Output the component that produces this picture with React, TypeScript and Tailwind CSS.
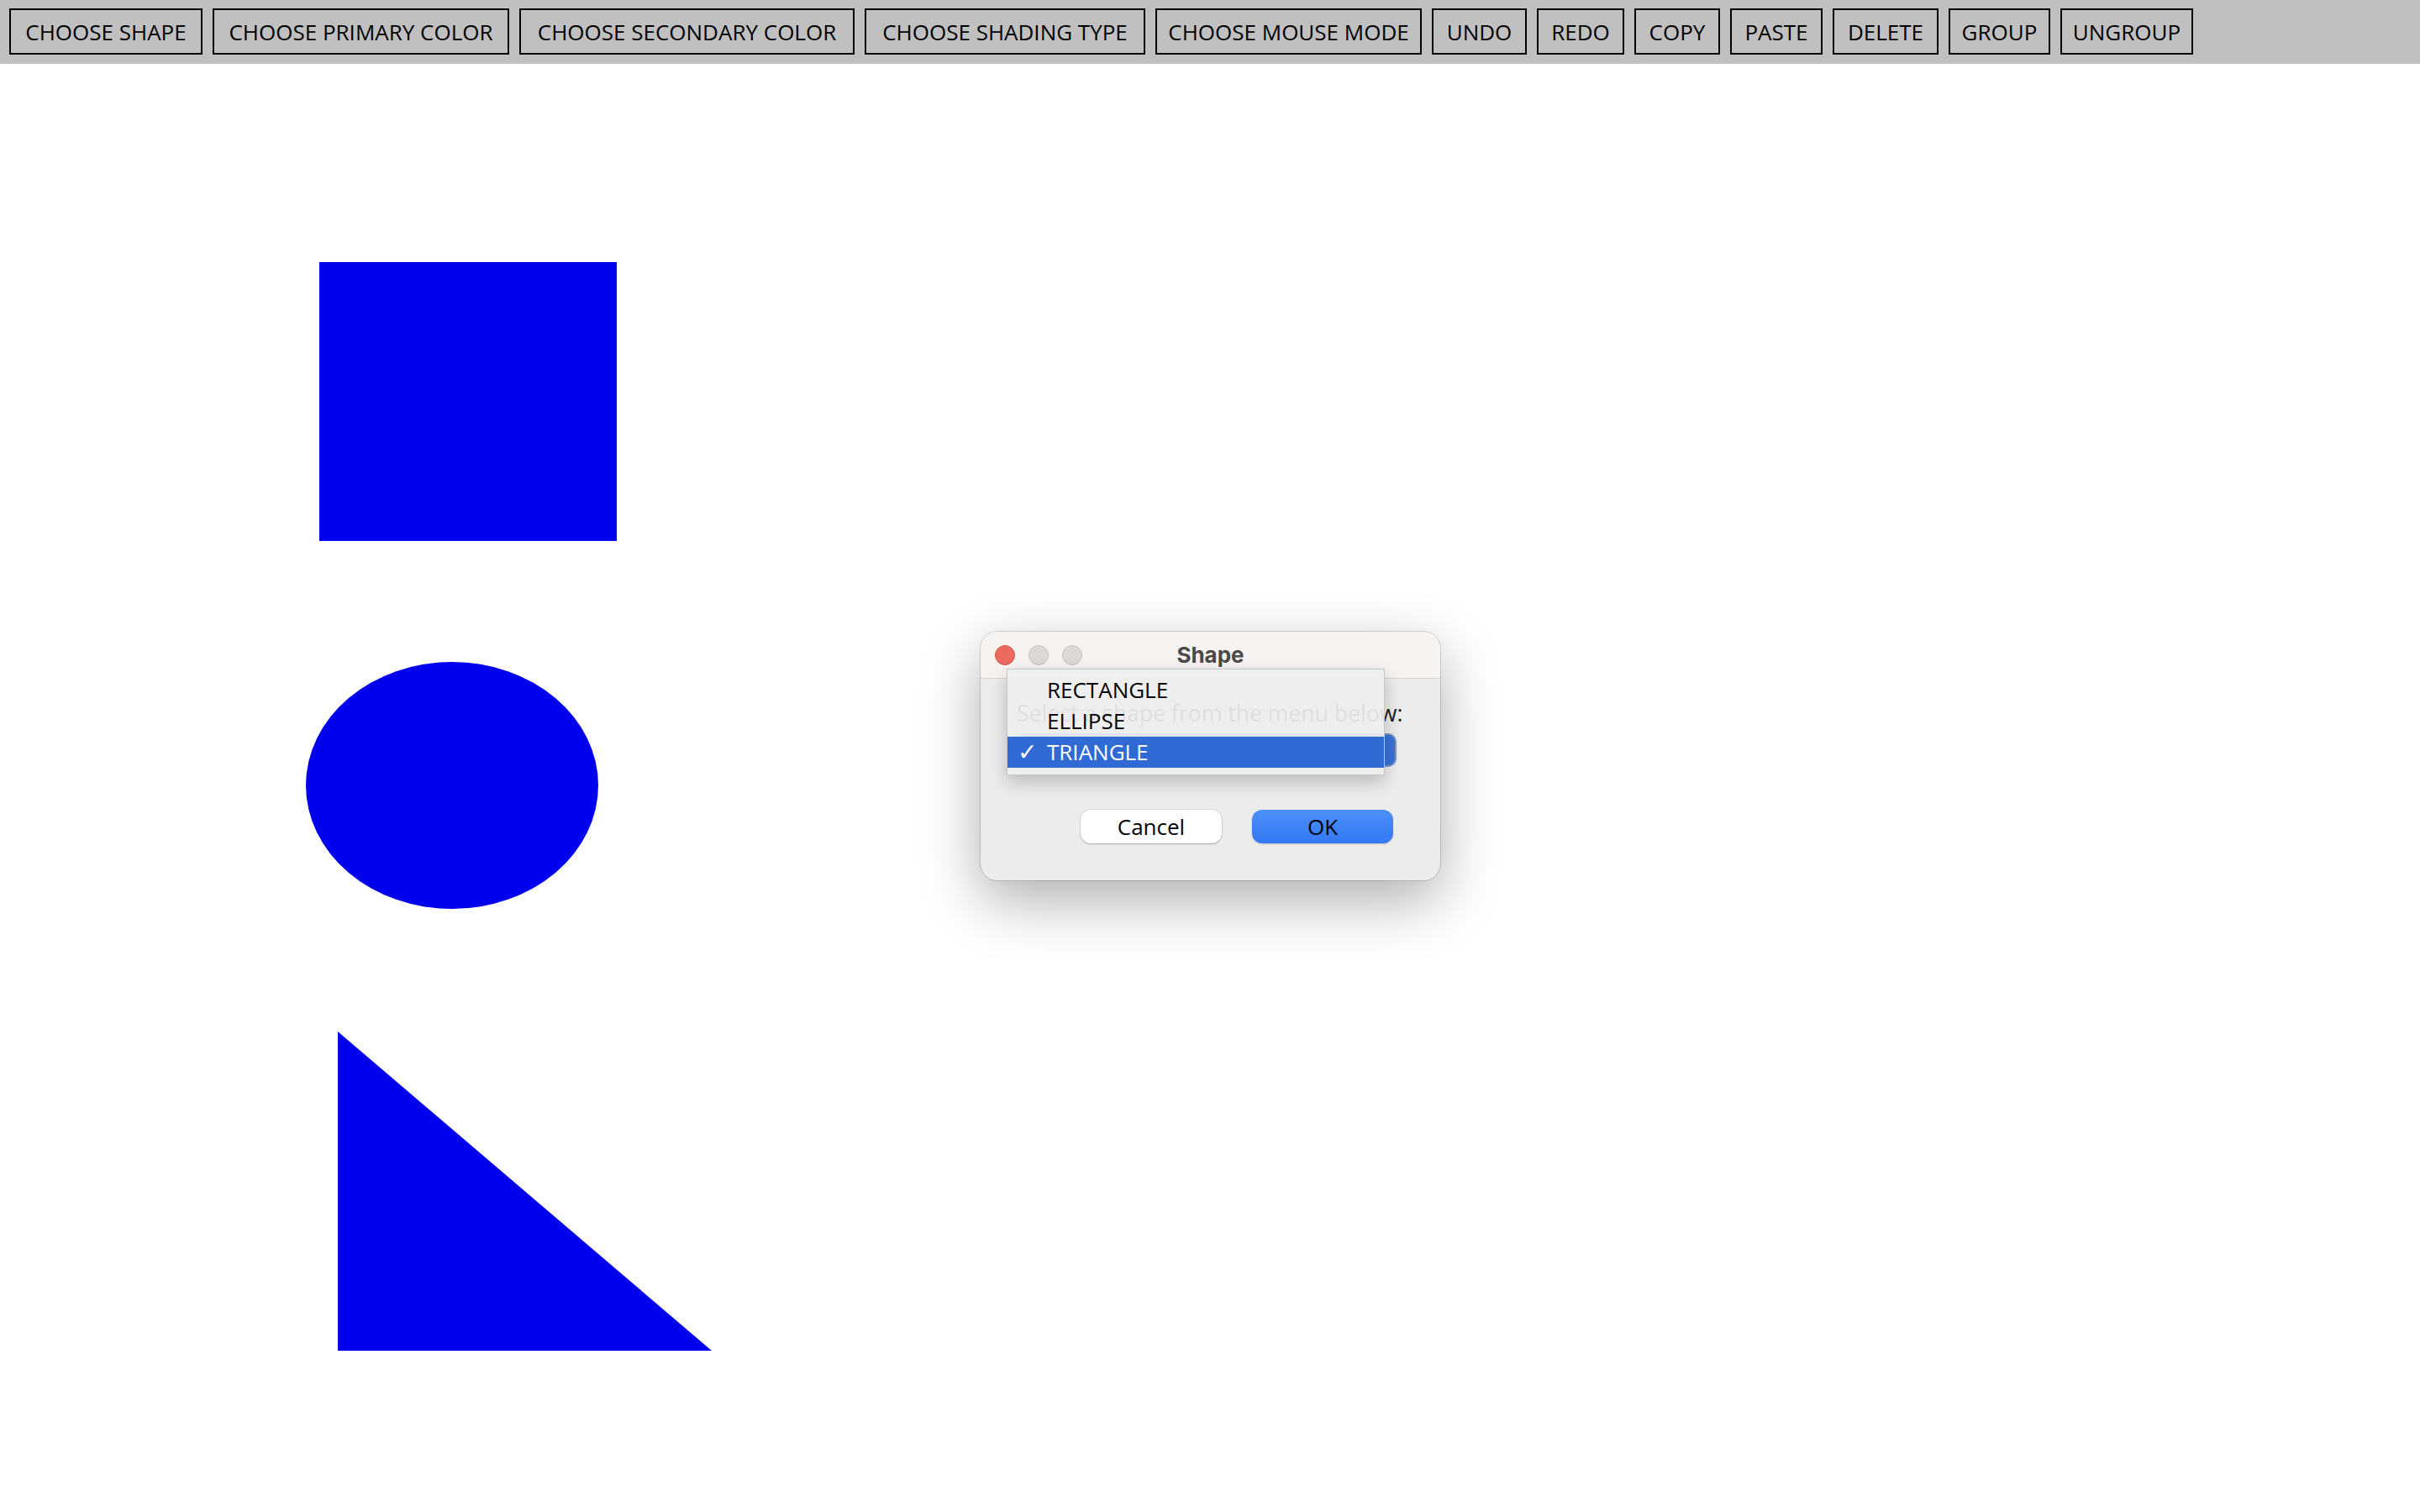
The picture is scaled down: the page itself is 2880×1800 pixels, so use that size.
import React from 'react';

const toolbarButtons: { label: string; width: string }[] = [
  { label: 'CHOOSE SHAPE', width: 'w-[230px]' },
  { label: 'CHOOSE PRIMARY COLOR', width: 'w-[353px]' },
  { label: 'CHOOSE SECONDARY COLOR', width: 'w-[399px]' },
  { label: 'CHOOSE SHADING TYPE', width: 'w-[334px]' },
  { label: 'CHOOSE MOUSE MODE', width: 'w-[317px]' },
  { label: 'UNDO', width: 'w-[113px]' },
  { label: 'REDO', width: 'w-[104px]' },
  { label: 'COPY', width: 'w-[102px]' },
  { label: 'PASTE', width: 'w-[110px]' },
  { label: 'DELETE', width: 'w-[126px]' },
  { label: 'GROUP', width: 'w-[121px]' },
  { label: 'UNGROUP', width: 'w-[158px]' },
];

const shapeOptions = ['RECTANGLE', 'ELLIPSE', 'TRIANGLE'];

function Toolbar() {
  return (
    <div className="flex h-[76px] gap-[12px] bg-[#c0c0c0] pl-[11px] pt-[10px]">
      {toolbarButtons.map((b) => (
        <button
          key={b.label}
          className={`${b.width} flex h-[55px] shrink-0 items-center justify-center border-2 border-black bg-[#c0c0c0] text-[26px] leading-none text-black`}
        >
          {b.label}
        </button>
      ))}
    </div>
  );
}

function ShapeDialog() {
  const selected = 'TRIANGLE';

  return (
    <div className="absolute left-[1167px] top-[752px] flex h-[296px] w-[547px] flex-col rounded-[20px] bg-[#ececec] shadow-[0_24px_70px_rgba(0,0,0,0.32),0_0_0_1px_rgba(0,0,0,0.14)]">
      {/* Title bar */}
      <div className="relative flex h-[56px] shrink-0 items-center rounded-t-[20px] border-b border-[#d9d5d3] bg-[#f7f3f1] px-[17px]">
        <div className="flex gap-[16px]">
          <span className="h-[24px] w-[24px] rounded-full border border-[#d4584c] bg-[#ec6a5e]" />
          <span className="h-[24px] w-[24px] rounded-full border border-[#c4c1bf] bg-[#dbd8d6]" />
          <span className="h-[24px] w-[24px] rounded-full border border-[#c4c1bf] bg-[#dbd8d6]" />
        </div>
        <div className="absolute inset-0 flex items-center justify-center font-['Inter',sans-serif] text-[26px] font-bold text-[#4a4a4a]">
          Shape
        </div>
      </div>

      {/* Body */}
      <div className="flex flex-1 flex-col px-[43px] pt-[25px]">
        <p className="whitespace-nowrap text-[26.6px] leading-[32px] text-[#1a1a1a]">Select a shape from the menu below:</p>
        <div className="mt-[8px] flex h-[40px] w-[452px] items-center justify-end rounded-[10px] border-2 border-[#7f97c6] bg-[#3a73d8] pr-[6px]">
          <svg width="26" height="30" viewBox="0 0 26 30" fill="none" stroke="#ffffff" strokeWidth="2.5" strokeLinecap="round" strokeLinejoin="round">
            <path d="M7 11 L13 5 L19 11" />
            <path d="M7 19 L13 25 L19 19" />
          </svg>
        </div>
        <div className="mt-[51px] flex justify-end gap-[36px] pr-[13px]">
          <button className="flex h-[40px] w-[168px] items-center justify-center rounded-[12px] bg-white text-[26px] text-black shadow-[0_1px_2px_rgba(0,0,0,0.25),0_0_0_1px_rgba(0,0,0,0.06)]">
            Cancel
          </button>
          <button className="flex h-[40px] w-[168px] items-center justify-center rounded-[12px] bg-gradient-to-b from-[#4b8ff7] to-[#3478f6] text-[26px] text-black shadow-[0_1px_2px_rgba(0,0,0,0.2)]">
            OK
          </button>
        </div>
      </div>

      {/* Open combo popup */}
      <div className="absolute left-[31px] top-[44px] z-10 h-[127px] w-[450px] border border-[#c6c6c6] bg-[#eeeeee]/[0.93] pt-[6px] shadow-[0_8px_20px_rgba(0,0,0,0.22)]">
        {shapeOptions.map((opt) => {
          const active = opt === selected;
          return (
            <div
              key={opt}
              className={`flex h-[37px] items-center text-[26px] ${active ? 'bg-[#306ad5] text-white' : 'text-black'}`}
            >
              <span className="w-[47px] pl-[12px] font-['DejaVu_Sans',sans-serif] text-[28px] leading-none">{active ? '✓' : ''}</span>
              <span>{opt}</span>
            </div>
          );
        })}
      </div>
    </div>
  );
}

export default function App() {
  return (
    <div className="relative h-[1800px] w-[2880px] overflow-hidden bg-white font-['Open_Sans',sans-serif]">
      <Toolbar />
      {/* Drawing canvas */}
      <div className="relative h-[1724px] w-full">
        <svg className="absolute inset-0" width="2880" height="1724" viewBox="0 76 2880 1724">
          <rect x="380" y="312" width="354" height="332" fill="#0000ef" />
          <ellipse cx="538" cy="935" rx="174" ry="147" fill="#0000ef" />
          <polygon points="402,1228 402,1608 847,1608" fill="#0000ef" />
        </svg>
      </div>
      <ShapeDialog />
    </div>
  );
}
